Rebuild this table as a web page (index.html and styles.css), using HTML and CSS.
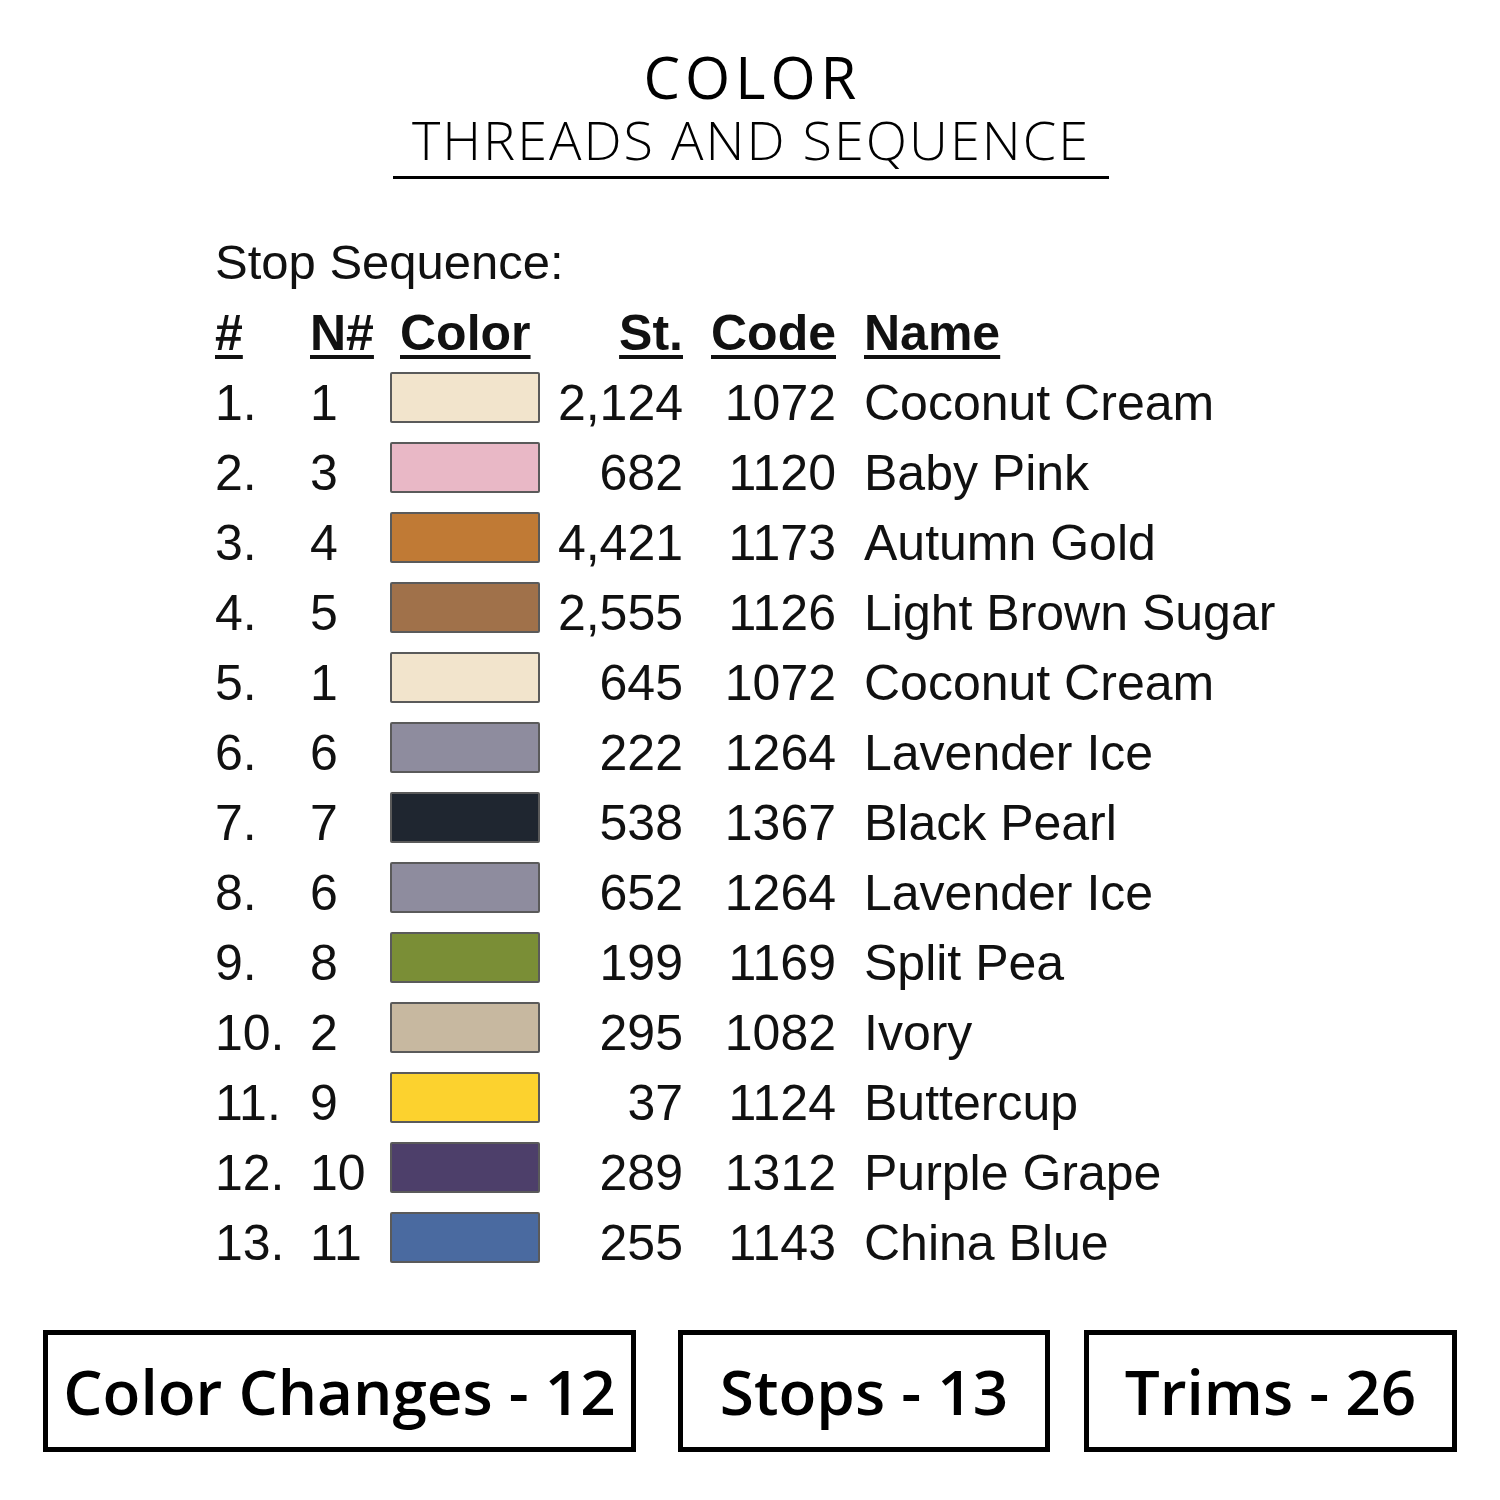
FILE: index.html
```html
<!DOCTYPE html>
<html>
<head>
<meta charset="utf-8">
<link rel="stylesheet" href="styles.css">
</head>
<body>
<div class="page">
  <header class="title">
    <div class="title-main">COLOR</div>
    <div class="title-sub">THREADS AND SEQUENCE</div>
    <div class="title-rule"></div>
  </header>

  <section class="seq">
    <div class="seq-caption">Stop Sequence:</div>
    <div class="grid">
      <div class="hd c-num"><span>#</span></div>
      <div class="hd c-n"><span>N#</span></div>
      <div class="hd c-color"><span>Color</span></div>
      <div class="hd c-st"><span>St.</span></div>
      <div class="hd c-code"><span>Code</span></div>
      <div class="hd c-name"><span>Name</span></div>

      <div class="c-num">1.</div><div class="c-n">1</div><div class="c-sw"><div class="sw sw-coconut"></div></div><div class="c-st">2,124</div><div class="c-code">1072</div><div class="c-name">Coconut Cream</div>
      <div class="c-num">2.</div><div class="c-n">3</div><div class="c-sw"><div class="sw sw-pink"></div></div><div class="c-st">682</div><div class="c-code">1120</div><div class="c-name">Baby Pink</div>
      <div class="c-num">3.</div><div class="c-n">4</div><div class="c-sw"><div class="sw sw-gold"></div></div><div class="c-st">4,421</div><div class="c-code">1173</div><div class="c-name">Autumn Gold</div>
      <div class="c-num">4.</div><div class="c-n">5</div><div class="c-sw"><div class="sw sw-brown"></div></div><div class="c-st">2,555</div><div class="c-code">1126</div><div class="c-name">Light Brown Sugar</div>
      <div class="c-num">5.</div><div class="c-n">1</div><div class="c-sw"><div class="sw sw-coconut"></div></div><div class="c-st">645</div><div class="c-code">1072</div><div class="c-name">Coconut Cream</div>
      <div class="c-num">6.</div><div class="c-n">6</div><div class="c-sw"><div class="sw sw-lav"></div></div><div class="c-st">222</div><div class="c-code">1264</div><div class="c-name">Lavender Ice</div>
      <div class="c-num">7.</div><div class="c-n">7</div><div class="c-sw"><div class="sw sw-black"></div></div><div class="c-st">538</div><div class="c-code">1367</div><div class="c-name">Black Pearl</div>
      <div class="c-num">8.</div><div class="c-n">6</div><div class="c-sw"><div class="sw sw-lav"></div></div><div class="c-st">652</div><div class="c-code">1264</div><div class="c-name">Lavender Ice</div>
      <div class="c-num">9.</div><div class="c-n">8</div><div class="c-sw"><div class="sw sw-pea"></div></div><div class="c-st">199</div><div class="c-code">1169</div><div class="c-name">Split Pea</div>
      <div class="c-num">10.</div><div class="c-n">2</div><div class="c-sw"><div class="sw sw-ivory"></div></div><div class="c-st">295</div><div class="c-code">1082</div><div class="c-name">Ivory</div>
      <div class="c-num">11.</div><div class="c-n">9</div><div class="c-sw"><div class="sw sw-butter"></div></div><div class="c-st">37</div><div class="c-code">1124</div><div class="c-name">Buttercup</div>
      <div class="c-num">12.</div><div class="c-n">10</div><div class="c-sw"><div class="sw sw-grape"></div></div><div class="c-st">289</div><div class="c-code">1312</div><div class="c-name">Purple Grape</div>
      <div class="c-num">13.</div><div class="c-n">11</div><div class="c-sw"><div class="sw sw-blue"></div></div><div class="c-st">255</div><div class="c-code">1143</div><div class="c-name">China Blue</div>
    </div>
  </section>

  <footer class="stats">
    <div class="stat stat-wide">Color Changes - 12</div>
    <div class="stat stat-mid">Stops - 13</div>
    <div class="stat stat-last">Trims - 26</div>
  </footer>
</div>
</body>
</html>
```

FILE: styles.css
```css
html, body {
  margin: 0;
  padding: 0;
  background: #ffffff;
}

.page {
  width: 1500px;
  height: 1500px;
  color: #111111;
  box-sizing: border-box;
  padding-top: 45px;
}

.title {
  display: flex;
  flex-direction: column;
  align-items: center;
}

.title-main {
  font-family: "Open Sans", "Lato", sans-serif;
  font-weight: 500;
  font-size: 58px;
  line-height: 64px;
  letter-spacing: 5px;
  padding-left: 5px;
  color: #000;
}

.title-sub {
  font-family: "Open Sans", "Lato", sans-serif;
  font-weight: 300;
  font-size: 54px;
  line-height: 56px;
  letter-spacing: 2px;
  padding-left: 2px;
  margin-top: 2px;
  color: #000;
}

.title-rule {
  width: 716px;
  height: 3px;
  background: #000;
  margin-top: 9px;
  margin-left: 1px;
}

.seq {
  padding-left: 215px;
  margin-top: 48px;
  font-family: "Liberation Sans", Arial, sans-serif;
  font-size: 50px;
  color: #111;
}

.seq-caption {
  font-size: 49px;
  line-height: 70px;
}

.grid {
  display: grid;
  grid-template-columns: 95px 80px 150px 143px 153px auto;
  grid-auto-rows: 70px;
  line-height: 70px;
  margin-top: 1px;
}

.hd {
  font-weight: bold;
}

.hd span {
  text-decoration: underline;
  text-decoration-thickness: 4px;
  text-underline-offset: 5px;
}

.c-num, .c-n {
  white-space: nowrap;
}

.hd.c-color {
  padding-left: 10px;
}

.c-st, .c-code {
  text-align: right;
  white-space: nowrap;
}

.c-name {
  padding-left: 28px;
  white-space: nowrap;
}

.c-sw {
  padding-top: 4px;
}

.sw {
  width: 146px;
  height: 47px;
  border: 2px solid #5a5a5a;
  border-radius: 2px;
}

.sw-coconut { background: #f2e4cc; }
.sw-pink { background: #e9b8c6; }
.sw-gold { background: #c07a35; }
.sw-brown { background: #a0714a; }
.sw-lav { background: #8e8c9e; }
.sw-black { background: #1f2630; }
.sw-pea { background: #7a8e36; }
.sw-ivory { background: #c7b8a0; }
.sw-butter { background: #fcd22e; }
.sw-grape { background: #4d3f6a; }
.sw-blue { background: #4a6aa0; }

.stats {
  display: flex;
  margin-top: 52px;
  padding-left: 43px;
}

.stat {
  box-sizing: border-box;
  height: 122px;
  border: 5px solid #000;
  display: flex;
  align-items: center;
  justify-content: center;
  font-family: "Open Sans", "Lato", sans-serif;
  font-weight: 600;
  font-size: 62px;
  color: #000;
  white-space: nowrap;
}

.stat-wide { width: 593px; }
.stat-mid { width: 372px; margin-left: 42px; }
.stat-last { width: 373px; margin-left: 34px; }
```
